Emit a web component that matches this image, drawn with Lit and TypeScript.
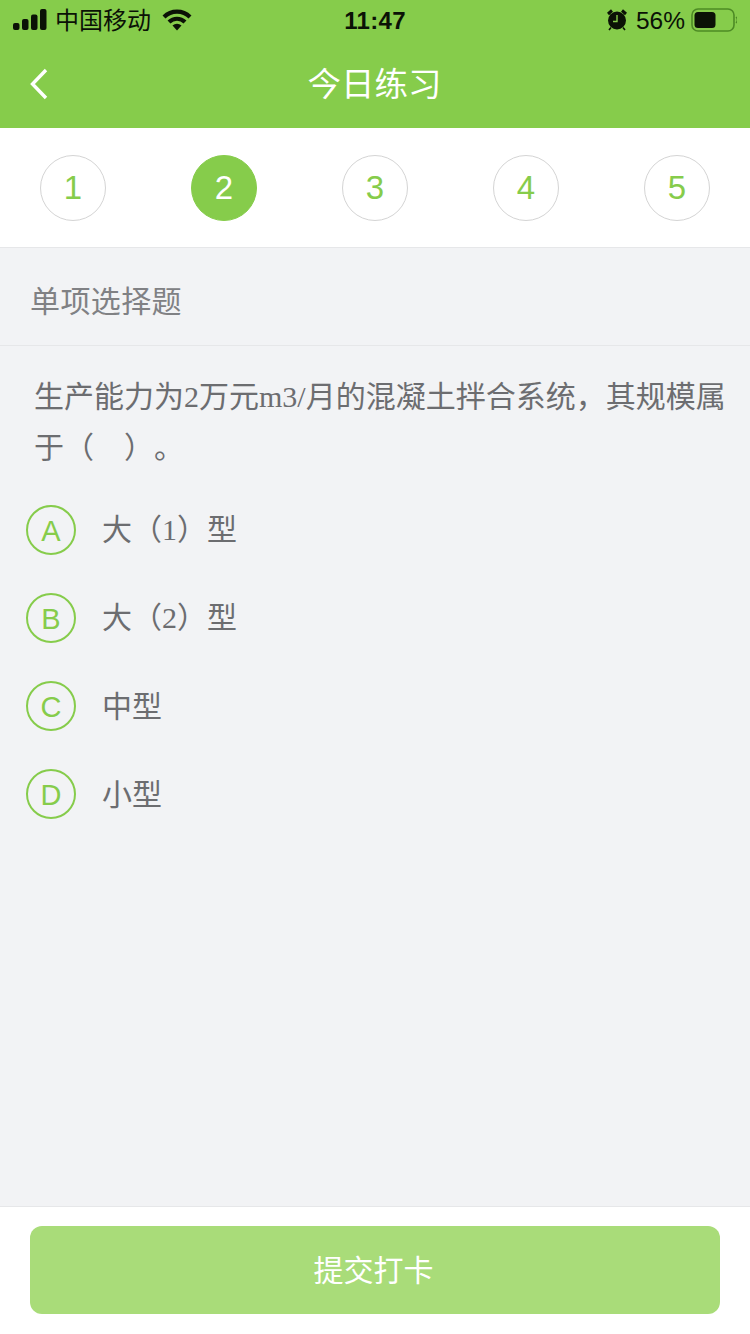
import { LitElement, html, css } from "lit";
import { customElement } from "lit/decorators.js";

const steps = [1, 2, 3, 4, 5];
const options = [
  { key: "A", text: html`大（<span class="num">1</span>）型` },
  { key: "B", text: html`大（<span class="num">2</span>）型` },
  { key: "C", text: html`中型` },
  { key: "D", text: html`小型` },
];

@customElement("app-root")
export class AppRoot extends LitElement {
  static styles = css`
    :host {
      display: flex;
      flex-direction: column;
      width: 750px;
      height: 1334px;
      background: #f2f3f5;
      font-family: "Liberation Sans", "Noto Sans CJK SC", sans-serif;
      overflow: hidden;
      text-spacing-trim: space-all;
    }
    .top { height: 128px; background: #86cc4b; display: flex; flex-direction: column; flex: none; }
    .status {
      height: 40px; display: grid; grid-template-columns: 1fr auto 1fr; align-items: center;
      color: #0b1206; padding: 0 13px;
    }
    .s-left { display: flex; align-items: center; font-size: 24px; }
    .s-left .carrier { margin-left: 8px; margin-right: 11px; line-height: 38px; padding-top: 2px; }
    .time { font-size: 24px; font-weight: 700; letter-spacing: 0.3px; padding-top: 1px; }
    .s-right { display: flex; align-items: center; justify-content: flex-end; font-size: 24.5px; }
    .s-right .pct { margin: 0 6px 0 8px; padding-top: 1px; }
    .nav { flex: 1; display: grid; grid-template-columns: 1fr auto 1fr; align-items: center; }
    .back { margin-left: 30px; display: block; }
    .title { color: #fff; font-size: 33.5px; line-height: 40px; padding-top: 2px; margin-left: -1px; }

    .steps {
      flex: none; background: #fff; border-bottom: 1px solid #e6e7e9;
      display: flex; align-items: flex-start; justify-content: space-between; padding: 27px 40px 0;
      box-sizing: border-box; height: 120px;
    }
    .step {
      width: 66px; height: 66px; border-radius: 50%; box-sizing: border-box; border: 1px solid #d4d4d4;
      color: #86cc4b; font-size: 33px; display: flex; align-items: center; justify-content: center;
    }
    .step.on { background: #86cc4b; border-color: #86cc4b; color: #fff; }

    .kind {
      height: 98px; flex: none; box-sizing: border-box; border-bottom: 1px solid #e6e7e9;
      padding: 4px 0 0 30px; display: flex; align-items: center; color: #808184; font-size: 30px; letter-spacing: 0.4px;
    }
    .question {
      margin: 0; padding: 25px 22px 0 34px; color: #6c6d70; font-size: 30px; line-height: 51px; flex: none;
      font-family: "Liberation Serif", "Noto Sans CJK SC", serif;
    }
    .opts { display: flex; flex-direction: column; gap: 38px; padding: 32px 0 0 26px; flex: none; }
    .opt { display: flex; align-items: center; height: 50px; }
    .mark {
      width: 50px; height: 50px; box-sizing: border-box; border: 2px solid #86cc4b; border-radius: 50%;
      color: #86cc4b; font-size: 29px; display: flex; align-items: center; justify-content: center; padding-top: 2px;
    }
    .txt { margin: -4px 0 0 26px; color: #6c6d70; font-size: 30px; line-height: 50px; font-family: "Noto Sans CJK SC", sans-serif; }
    .num { font-family: "Liberation Serif", serif; }

    .spacer { flex: 1; }
    .foot {
      height: 128px; flex: none; box-sizing: border-box; background: #fff; border-top: 1px solid #e6e7e9;
      padding: 19px 30px 0;
    }
    .submit {
      width: 100%; height: 88px; border: 0; border-radius: 12px; background: #a9dc79; color: #fff;
      font-size: 30px; font-family: inherit; display: flex; align-items: center; justify-content: center; padding: 0 3px 4px 0;
    }
  `;

  render() {
    return html`
      <div class="top">
        <div class="status">
          <div class="s-left">
            <svg width="34" height="22" viewBox="0 0 34 22">
              <rect x="0" y="14" width="6.5" height="7" rx="2" fill="#0b1206" />
              <rect x="9" y="10" width="6.5" height="11" rx="2" fill="#0b1206" />
              <rect x="18" y="5.5" width="6.5" height="15.5" rx="2" fill="#0b1206" />
              <rect x="27" y="0" width="6.5" height="21" rx="2" fill="#0b1206" />
            </svg>
            <span class="carrier">中国移动</span>
            <svg width="30" height="22" viewBox="0 0 30 22">
              <path d="M2 8 A18.5 18.5 0 0 1 28 8" fill="none" stroke="#0b1206" stroke-width="4.2" />
              <path d="M7 13 A11.5 11.5 0 0 1 23 13" fill="none" stroke="#0b1206" stroke-width="4.2" />
              <path d="M10.5 16.5 L15 21.5 L19.5 16.5 A7 7 0 0 0 10.5 16.5 Z" fill="#0b1206" />
            </svg>
          </div>
          <div class="time">11:47</div>
          <div class="s-right">
            <svg width="22" height="22" viewBox="0 0 22 22">
              <circle cx="11" cy="11.5" r="9" fill="#0b1206" />
              <path d="M11 6 V12.5 H7" fill="none" stroke="#86cc4b" stroke-width="1.4" />
              <path d="M2 5 L6 1.5 M20 5 L16 1.5" stroke="#0b1206" stroke-width="3" />
              <path d="M5 18.5 L3 21 M17 18.5 L19 21" stroke="#0b1206" stroke-width="1.6" />
            </svg>
            <span class="pct">56%</span>
            <svg width="46" height="24" viewBox="0 0 46 24">
              <rect x="1" y="1" width="42" height="22" rx="6" fill="none" stroke="#4d8a25" stroke-width="1.6" />
              <rect x="3.5" y="4" width="21" height="16" rx="3.5" fill="#0b1206" />
              <path d="M45 9 A4 4 0 0 1 45 15" fill="none" stroke="#4d8a25" stroke-width="1.4" />
            </svg>
          </div>
        </div>
        <div class="nav">
          <svg class="back" width="18" height="32" viewBox="0 0 18 32">
            <path d="M16 2 L2.5 16 L16 30" fill="none" stroke="#fff" stroke-width="3.4" />
          </svg>
          <span class="title">今日练习</span>
        </div>
      </div>

      <div class="steps">
        ${steps.map((n) => html`<div class="step ${n === 2 ? "on" : ""}">${n}</div>`)}
      </div>
      <div class="kind">单项选择题</div>
      <p class="question">生产能力为2万元m3/月的混凝土拌合系统，其规模属于（ &nbsp;&nbsp;&nbsp;）。</p>
      <div class="opts">
        ${options.map(
          (o) => html`<div class="opt"><span class="mark">${o.key}</span><span class="txt">${o.text}</span></div>`
        )}
      </div>
      <div class="spacer"></div>
      <div class="foot"><button class="submit">提交打卡</button></div>
    `;
  }
}
